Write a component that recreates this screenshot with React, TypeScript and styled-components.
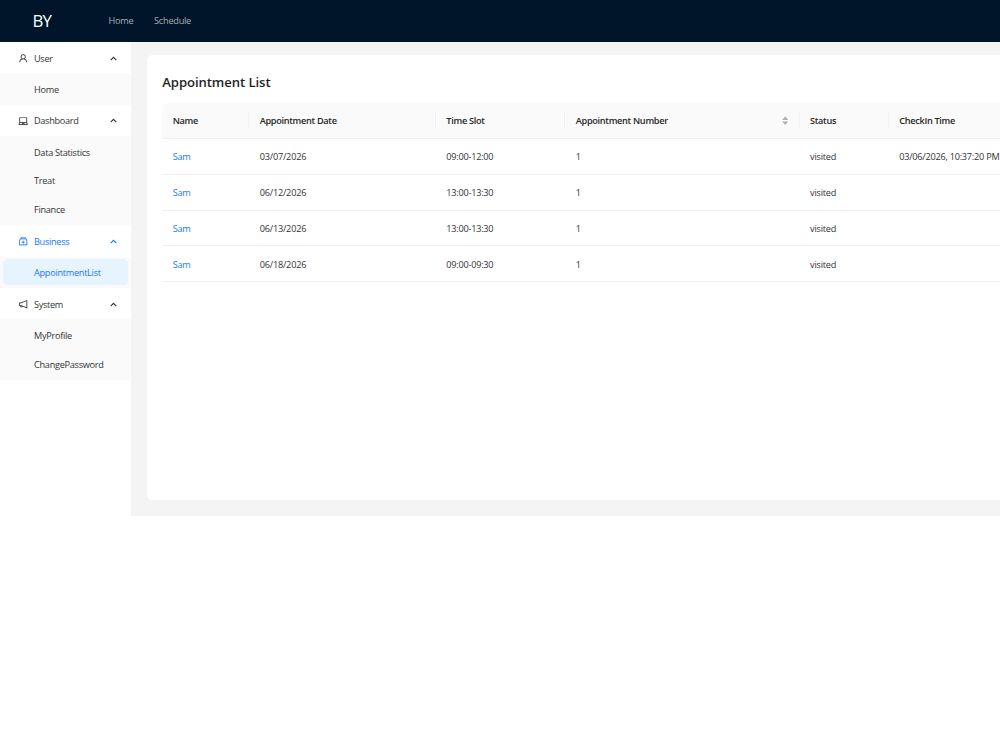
import React from 'react';
import styled, { createGlobalStyle } from 'styled-components';
import {
  AiOutlineUser,
  AiOutlineLaptop,
  AiOutlineMedicineBox,
  AiOutlineNotification,
  AiFillCaretUp,
  AiFillCaretDown,
} from 'react-icons/ai';

const GlobalStyle = createGlobalStyle`
  * { box-sizing: border-box; }
  html, body { margin: 0; height: 100%; overflow: hidden; background: #fff; }
  body {
    font-family: 'Open Sans', 'Noto Sans', sans-serif;
    font-size: 9.17px;
    line-height: 14px;
    letter-spacing: -0.3px;
    color: #333;
  }
`;

const Page = styled.div`
  width: 1000px;
  height: 750px;
  overflow: hidden;
`;

const Header = styled.header`
  display: flex;
  align-items: center;
  height: 41.6px;
  padding-left: 32.6px;
  background: #001529;
`;

const Brand = styled.div`
  width: 75.9px;
  color: #fff;
  font-size: 16.8px;
  letter-spacing: -1px;
`;

const NavLink = styled.a`
  margin-right: 20.7px;
  padding-top: 1px;
  letter-spacing: -0.24px;
  color: rgba(255, 255, 255, 0.65);
`;

const Body = styled.div`
  display: flex;
  height: 474.3px;
`;

const Sidebar = styled.nav`
  flex: none;
  width: 130.9px;
  padding-top: 0.3px;
  background: #fff;
`;

const GroupTitle = styled.div<{ $active?: boolean }>`
  display: flex;
  align-items: center;
  height: 31.44px;
  padding: 1px 14px 0 17.8px;
  color: ${(p) => (p.$active ? '#1677ff' : '#333')};
`;

const GroupIcon = styled.span`
  display: flex;
  width: 16.2px;
  font-size: 10.4px;

  svg {
    stroke: currentColor;
    stroke-width: 10;
  }
`;

const GroupLabel = styled.span`
  flex: 1;
  padding-top: 0.8px;
`;

const Arrow = styled.svg`
  width: 7px;
  height: 5px;
  margin-right: 0.2px;
  fill: none;
  stroke: currentColor;
  stroke-width: 1.15;
`;

const SubMenu = styled.div`
  padding: 2.62px 2.62px 0;
  background: #fafafa;
`;

const SubItem = styled.div<{ $selected?: boolean }>`
  display: flex;
  align-items: center;
  height: 26.2px;
  margin-bottom: 2.62px;
  padding: 1.3px 0 0 31.4px;
  border-radius: 5.2px;
  letter-spacing: -0.28px;
  color: ${(p) => (p.$selected ? '#1677ff' : '#333')};
  background: ${(p) => (p.$selected ? '#e6f4ff' : 'transparent')};
`;

const SubMenuWrap = styled.div`
  display: flow-root;
  background: #fafafa;
`;

const Main = styled.main`
  flex: 1;
  min-width: 0;
  padding: 13px 0 15.7px 15.7px;
  background: #f4f4f4;
`;

const Card = styled.section`
  height: 100%;
  padding: 18px 0 0 15.7px;
  overflow: hidden;
  border-radius: 5.2px 0 0 5.2px;
  background: #fff;
`;

const Title = styled.h1`
  margin: 0 0 11px;
  font-size: 13.1px;
  font-weight: 600;
  line-height: 19px;
  letter-spacing: -0.07px;
  color: #1f1f1f;
`;

const columnTracks = '87px 186.7px 129.4px 234.3px 89.2px 140px';

const HeadRow = styled.div`
  display: grid;
  grid-template-columns: ${columnTracks};
  align-items: center;
  height: 36.4px;
  border-bottom: 1px solid #f0f0f0;
  border-top-left-radius: 5.2px;
  background: #fafafa;
`;

const HeadCell = styled.div<{ $last?: boolean }>`
  display: flex;
  align-items: center;
  justify-content: space-between;
  height: 16px;
  padding: 1px 9.5px 0 10.4px;
  border-right: ${(p) => (p.$last ? 'none' : '1px solid #f0f0f0')};
  font-weight: 600;
  color: #262626;
  white-space: nowrap;
`;

const Sorter = styled.span`
  display: flex;
  flex-direction: column;
  align-items: center;
  font-size: 8.4px;
  color: #b0b0b0;

  svg + svg {
    margin-top: -3.8px;
  }
`;

const Row = styled.div`
  display: grid;
  grid-template-columns: ${columnTracks};
  align-items: center;
  height: 35.8px;
  border-bottom: 1px solid #f0f0f0;
`;

const Cell = styled.div<{ $tracking?: number }>`
  padding: 2px 0 0 10.4px;
  letter-spacing: ${(p) => p.$tracking ?? -0.2}px;
  white-space: nowrap;
`;

const NameLink = styled.a`
  color: #1677ff;
`;

const groups = [
  { label: 'User', icon: AiOutlineUser, items: ['Home'] },
  { label: 'Dashboard', icon: AiOutlineLaptop, items: ['Data Statistics', 'Treat', 'Finance'] },
  { label: 'Business', icon: AiOutlineMedicineBox, items: ['AppointmentList'] },
  { label: 'System', icon: AiOutlineNotification, items: ['MyProfile', 'ChangePassword'] },
];

const columns = ['Name', 'Appointment Date', 'Time Slot', 'Appointment Number', 'Status', 'CheckIn Time'];

const rows = [
  { date: '03/07/2026', slot: '09:00-12:00', checkIn: '03/06/2026, 10:37:20 PM' },
  { date: '06/12/2026', slot: '13:00-13:30', checkIn: '' },
  { date: '06/13/2026', slot: '13:00-13:30', checkIn: '' },
  { date: '06/18/2026', slot: '09:00-09:30', checkIn: '' },
];

export default function App() {
  return (
    <Page>
      <GlobalStyle />
      <Header>
        <Brand>BY</Brand>
        <NavLink>Home</NavLink>
        <NavLink>Schedule</NavLink>
      </Header>
      <Body>
        <Sidebar>
          {groups.map(({ label, icon: Icon, items }) => (
            <React.Fragment key={label}>
              <GroupTitle $active={label === 'Business'}>
                <GroupIcon>
                  <Icon />
                </GroupIcon>
                <GroupLabel>{label}</GroupLabel>
                <Arrow viewBox="0 0 7 5">
                  <path d="M0.7 4.1 3.5 1.3 6.3 4.1" />
                </Arrow>
              </GroupTitle>
              <SubMenuWrap>
                <SubMenu>
                  {items.map((item) => (
                    <SubItem key={item} $selected={item === 'AppointmentList'}>
                      {item}
                    </SubItem>
                  ))}
                </SubMenu>
              </SubMenuWrap>
            </React.Fragment>
          ))}
        </Sidebar>
        <Main>
          <Card>
            <Title>Appointment List</Title>
            <HeadRow>
              {columns.map((c, i) => (
                <HeadCell key={c} $last={i === columns.length - 1}>
                  {c}
                  {c === 'Appointment Number' && (
                    <Sorter>
                      <AiFillCaretUp />
                      <AiFillCaretDown />
                    </Sorter>
                  )}
                </HeadCell>
              ))}
            </HeadRow>
            {rows.map((r) => (
              <Row key={r.date}>
                <Cell>
                  <NameLink>Sam</NameLink>
                </Cell>
                <Cell $tracking={-0.2}>{r.date}</Cell>
                <Cell $tracking={-0.24}>{r.slot}</Cell>
                <Cell>1</Cell>
                <Cell>visited</Cell>
                <Cell $tracking={-0.24}>{r.checkIn}</Cell>
              </Row>
            ))}
          </Card>
        </Main>
      </Body>
    </Page>
  );
}
